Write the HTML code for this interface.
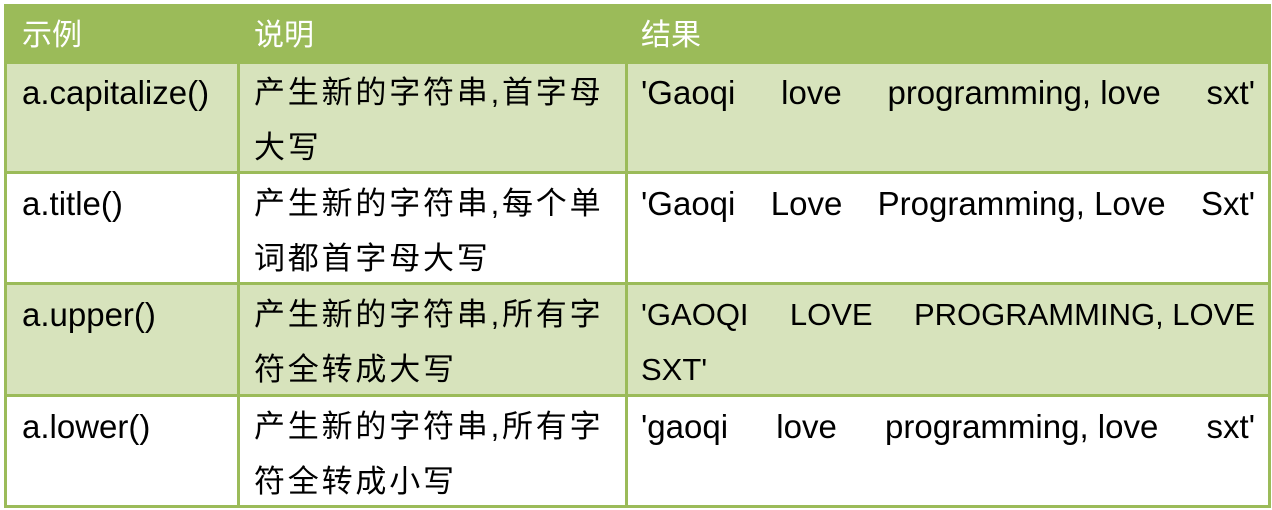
<!DOCTYPE html>
<html><head><meta charset="utf-8"><style>
body{margin:0;width:1272px;height:510px;background:#fff;position:relative;overflow:hidden;font-family:"Liberation Sans","Noto Sans CJK SC",sans-serif;font-size:33px;color:#000}
.bg{position:absolute}
.v{position:absolute;background:#9bbb59;width:3px}
.h{position:absolute;background:#9bbb59;height:3px;left:4px;width:1267px}
.t{position:absolute;line-height:55px;white-space:nowrap}
.j{display:flex;justify-content:space-between;width:614px}
.hd{color:#fff;font-size:30px}
.c{font-size:31px;letter-spacing:2.8px}
</style></head><body>
<div class="bg" style="left:4px;top:5px;width:1267px;height:57px;background:#9bbb59"></div>
<div class="bg" style="left:4px;top:62px;width:1267px;height:110px;background:#d7e3bc"></div>
<div class="bg" style="left:4px;top:283px;width:1267px;height:112px;background:#d7e3bc"></div>
<div class="h" style="top:4px"></div>
<div class="h" style="top:61px"></div>
<div class="h" style="top:171px"></div>
<div class="h" style="top:282px"></div>
<div class="h" style="top:394px"></div>
<div class="h" style="top:505px"></div>
<div class="v" style="left:4px;top:4px;height:504px"></div>
<div class="v" style="left:237px;top:61px;height:447px"></div>
<div class="v" style="left:625px;top:61px;height:447px"></div>
<div class="v" style="left:1268px;top:4px;height:504px"></div>

<div class="t hd" style="left:22px;top:8px">示例</div>
<div class="t hd" style="left:254px;top:8px">说明</div>
<div class="t hd" style="left:641px;top:8px">结果</div>

<div class="t" style="left:22px;top:65px">a.capitalize()</div>
<div class="t c" style="left:254px;top:65px">产生新的字符串,首字母<br>大写</div>
<div class="t j" style="left:641px;top:65px"><span>'Gaoqi</span><span>love</span><span>programming, love</span><span>sxt'</span></div>

<div class="t" style="left:22px;top:176px">a.title()</div>
<div class="t c" style="left:254px;top:176px">产生新的字符串,每个单<br>词都首字母大写</div>
<div class="t j" style="left:641px;top:176px"><span>'Gaoqi</span><span>Love</span><span>Programming, Love</span><span>Sxt'</span></div>

<div class="t" style="left:22px;top:287px">a.upper()</div>
<div class="t c" style="left:254px;top:287px">产生新的字符串,所有字<br>符全转成大写</div>
<div class="t j" style="left:641px;top:287px;font-size:31px"><span>'GAOQI</span><span>LOVE</span><span>PROGRAMMING, LOVE</span></div>
<div class="t" style="left:641px;top:342px;font-size:31px">SXT'</div>

<div class="t" style="left:22px;top:399px">a.lower()</div>
<div class="t c" style="left:254px;top:399px">产生新的字符串,所有字<br>符全转成小写</div>
<div class="t j" style="left:641px;top:399px"><span>'gaoqi</span><span>love</span><span>programming, love</span><span>sxt'</span></div>
</body></html>
